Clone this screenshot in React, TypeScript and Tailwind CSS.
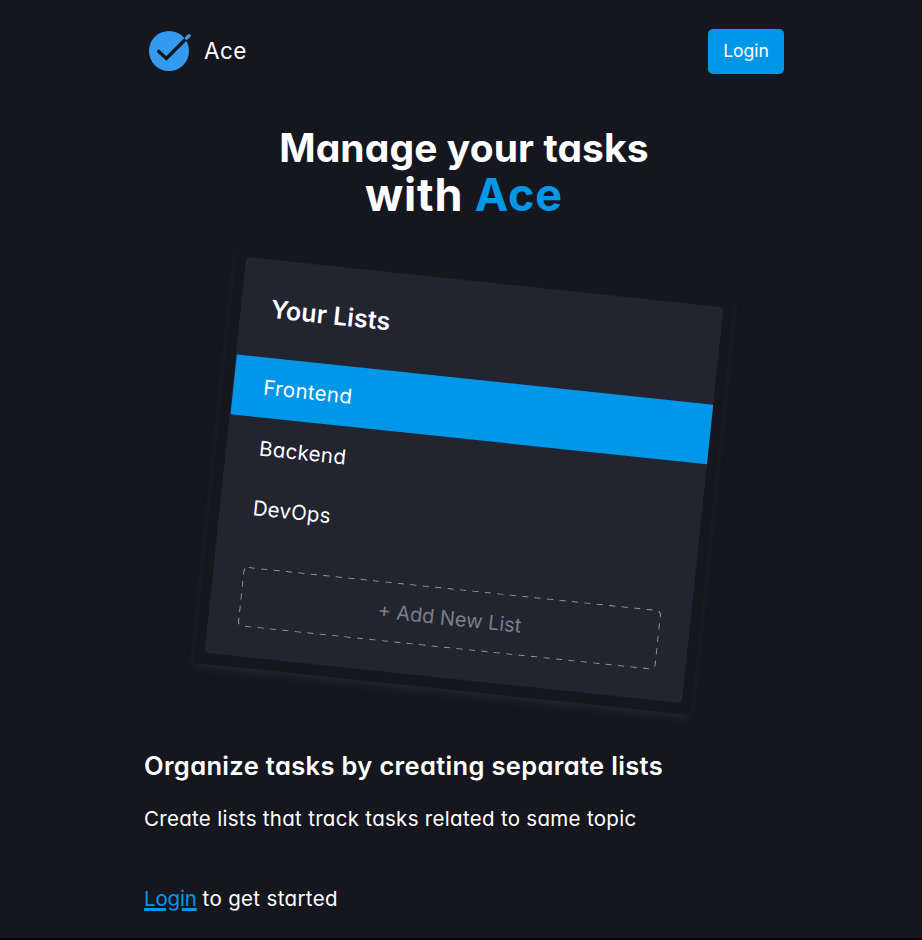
function Logo() {
  return (
    <svg className="h-[45px] w-[45px]" viewBox="0 0 45 45" fill="none">
      <circle cx="20" cy="22" r="20" fill="#349aef" />
      <path d="M9.7 22.4 17.4 29.4 35.6 11.2" stroke="#16171e" strokeWidth="3.4" strokeLinecap="round" />
      <path d="M37.6 9.1 40.1 6.7" stroke="#349aef" strokeWidth="3.4" strokeLinecap="round" />
    </svg>
  );
}

function ListsCard() {
  return (
    <div className="mx-auto h-[420px] w-[500px] rotate-6 bg-[#16161d] px-[10px] py-[11px] shadow-[0_5px_9px_-2px_#242532]">
      <div className="flex h-[398px] flex-col rounded-[5px] bg-[#222430] text-[20.5px]">
        <div className="flex h-[98px] items-center px-[30px] pt-[2px] text-[25px] font-semibold tracking-[0.15px]">
          Your Lists
        </div>
        <div className="ml-px flex h-[60px] items-center bg-[#0097e9] px-[30px] pt-px tracking-[0.35px]">Frontend</div>
        <div className="flex h-[60px] items-center px-[33px] pt-[2px] tracking-[0.35px]">Backend</div>
        <div className="flex h-[60px] items-center px-[33px] pt-[2px] tracking-[0.2px]">DevOps</div>
        <div className="mx-[30px] mt-[30px] grid h-[60px] place-items-center text-[20px] text-[#7c7d89]">
          <svg className="col-start-1 row-start-1 h-[60px] w-[420px]" viewBox="0 0 420 60" fill="none">
            <rect x="0.5" y="0.5" width="419" height="59" rx="4.5" stroke="#8b8c96" strokeWidth="1.25" strokeDasharray="6.2 6.3" />
          </svg>
          <span className="col-start-1 row-start-1">+ Add New List</span>
        </div>
      </div>
    </div>
  );
}

export default function App() {
  return (
    <div className="h-[940px] overflow-hidden bg-black font-[Inter,sans-serif] text-white [font-feature-settings:'cv11']">
      <div className="h-[938px] overflow-hidden bg-[#16171e]">
        <div className="ml-[144px] w-[640px]">
          <header className="flex h-[103px] items-center justify-between">
            <div className="flex items-center gap-[10px] pl-[5px]">
              <Logo />
              <span className="pb-px text-[22.5px] tracking-[0.4px]">Ace</span>
            </div>
            <button className="flex h-[45px] w-[76px] items-center justify-center rounded-[5px] bg-[#0097e9] text-[17.5px]">
              Login
            </button>
          </header>
          <h1 className="mt-[22px] flex flex-col items-center text-[39px] font-bold leading-[46px] tracking-[0.1px]">
            <span>Manage your tasks</span>
            <span className="pt-px text-[45px] leading-[46px] tracking-[0.8px]">
              with <span className="text-[#0097e9]">Ace</span>
            </span>
          </h1>
          <div className="mt-[52px]">
            <ListsCard />
          </div>
          <h2 className="mt-[57px] h-[38px] text-[25.5px] font-semibold leading-[38px] tracking-[0.34px]">
            Organize tasks by creating separate lists
          </h2>
          <p className="mt-[19px] text-[20.5px] leading-[30px] tracking-[0.3px]">
            Create lists that track tasks related to same topic
          </p>
          <p className="mt-[50px] text-[20.5px] leading-[30px]">
            <span className="text-[#0097e9] underline decoration-[3px] tracking-[-0.15px]">Login</span>{" "}
            <span className="tracking-[0.34px]">to get started</span>
          </p>
        </div>
      </div>
    </div>
  );
}
